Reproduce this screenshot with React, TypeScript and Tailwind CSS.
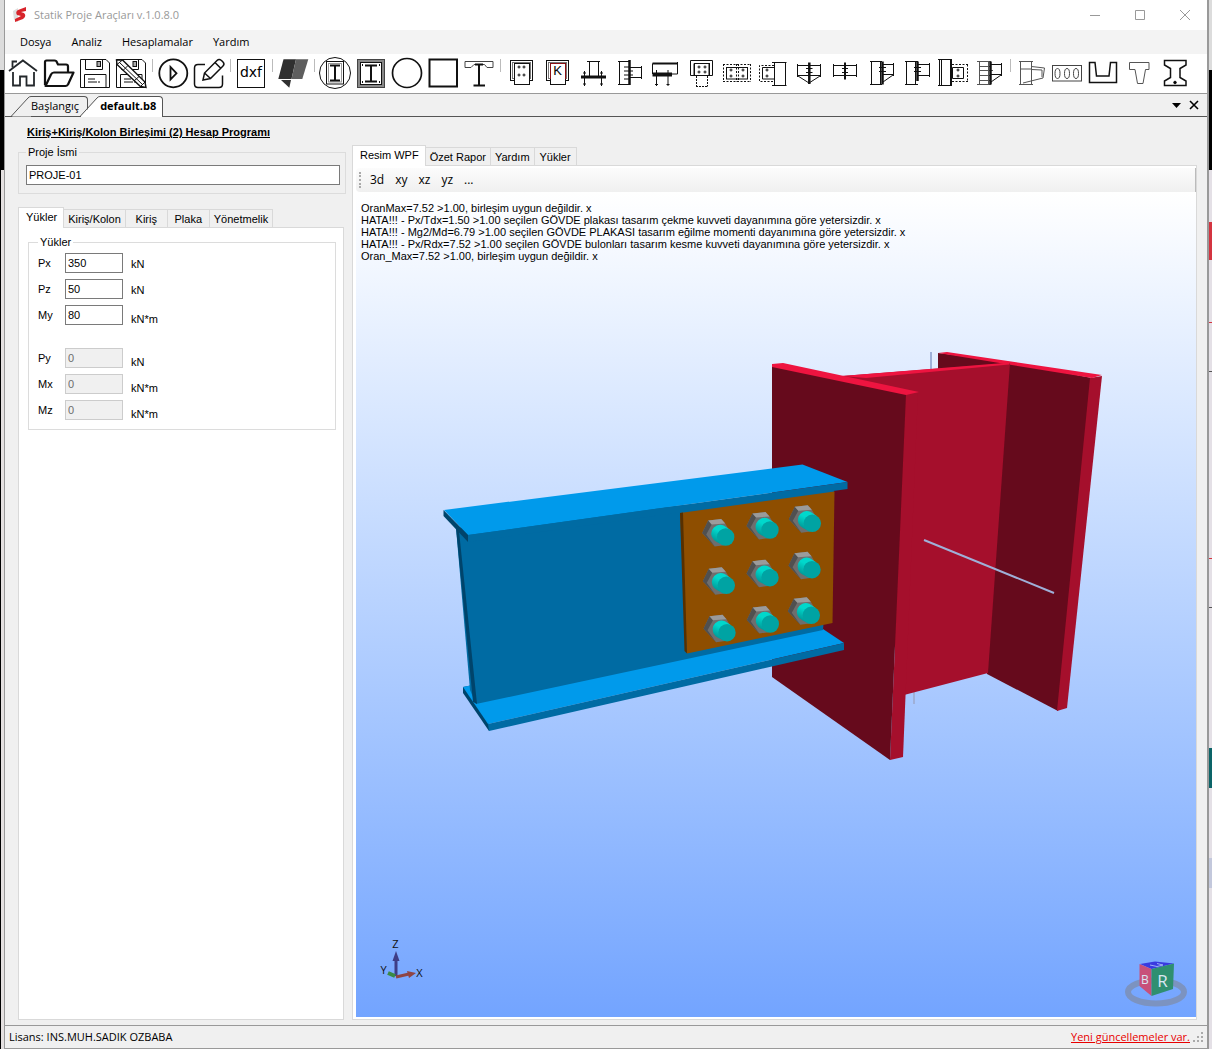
import { useState } from 'react'
import type { ReactNode } from 'react'
import clsx from 'clsx'

type Tool = { name: string; art: ReactNode }

const thick = { strokeWidth: 2 }
const dash = { strokeDasharray: '2 1.5' }

const bolts: [number, number][] = [
  [725.7, 537], [770, 530], [812.3, 523.3],
  [726.3, 585.3], [770, 577.7], [812, 569.7],
  [727, 632.7], [770.3, 624], [811.3, 615.3],
]

function Dots({ xs, ys }: { xs: number[]; ys: number[] }) {
  return (
    <>
      {xs.map((x) =>
        ys.map((y) => (
          <path key={`${x}-${y}`} d={`M${x - 1.5} ${y}h3M${x} ${y - 1.5}v3`} />
        ))
      )}
    </>
  )
}

const Floppy = () => (
  <>
    <path d="M3.5 4.5H29L32.5 8V32.5H3.5Z" />
    <path d="M8.5 4.5V14.5H25.5V4.5" />
    <rect x="20" y="6.5" width="3.5" height="5" fill="#aaa" />
    <path d="M7.5 32.5V19.5H29V32.5" />
    <path d="M11 24h7M11 27h9M21 27h2" />
  </>
)

const toolGroups: Tool[][] = [
  [
    {
      name: 'Ana sayfa',
      art: (
        <g stroke="#24282c" strokeWidth="1.8">
          <path d="M4 16 17.9 5.5 32 16" />
          <path d="M8 17V30.5H15V21.5H21.5V30.5H29V17" />
          <path d="M7.5 12.5V6.5H12" />
        </g>
      ),
    },
    {
      name: 'Aç',
      art: (
        <g strokeWidth="2.2" strokeLinejoin="round">
          <path d="M4 30V7Q4 5.5 5.5 5.5H13.5Q15.5 5.5 16 7.5L17 9.5H25Q27 9.5 27 11.5V17.5" />
          <path d="M4.5 31 10 19.5Q11 17.5 13 17.5H32.5L27 29.5Q26 31 24.5 31Z" />
        </g>
      ),
    },
    { name: 'Kaydet', art: <Floppy /> },
    {
      name: 'Farklı kaydet',
      art: (
        <>
          <Floppy />
          <path d="M3.5 5 9.5 5 32 27 33 32.5 27.500 31.500 4 9.5Z" fill="#fff" strokeWidth="1.4" />
          <path d="M6.5 7.5 30 30M9.5 5 4 9.5M15 10.5 10 15.500M26 21.5 21 26M32 27 27.500 31.500" />
        </>
      ),
    },
  ],
  [
    {
      name: 'Çalıştır',
      art: (
        <g strokeWidth="1.8">
          <circle cx="18.3" cy="18.3" r="14" />
          <path d="M15.5 12V24.5L21.5 18.3Z" />
        </g>
      ),
    },
    {
      name: 'Düzenle',
      art: (
        <g strokeWidth="1.5">
          <path d="M14 9.5H7Q3.5 9.5 3.5 13V29Q3.5 32.5 7 32.5H28Q31.5 32.5 31.5 29V20.5" />
          <path d="M12 25 13.5 18 26 5.5Q28 3.5 30.5 5.5L32 7Q34 9 32 11L19.5 23.5ZM24 7.5 30 13.5M13.5 18 19.5 23.5" />
        </g>
      ),
    },
  ],
  [
    {
      name: 'dxf',
      art: (
        <>
          <rect x="4.5" y="4.5" width="27" height="28" />
          <text x="18" y="22" textAnchor="middle" fontSize="14" fill="#000" stroke="none" fontFamily="DejaVu Sans, sans-serif">dxf</text>
        </>
      ),
    },
  ],
  [
    {
      name: 'Katı model',
      art: (
        <g stroke="none">
          <path d="M8.5 4.3H21L16.5 24H3.3Z" fill="#303030" />
          <path d="M21 4.3H33.3L27.3 24H16.5Z" fill="#5e5e5e" />
          <path d="M6 25H16L14.3 32.7Z" fill="#303030" />
        </g>
      ),
    },
  ],
  [
    {
      name: 'Dairesel kolon',
      art: (
        <>
          <circle cx="18" cy="18" r="15.5" />
          <rect x="9.5" y="6.5" width="17" height="22.5" />
          <rect x="11.5" y="8.5" width="13" height="18.5" stroke="#999" />
          <path d="M13 10.5H23M18 10.5V25.5M13 25.5H23" {...thick} />
        </>
      ),
    },
    {
      name: 'Kare kolon',
      art: (
        <>
          <rect x="6" y="6" width="24" height="25" stroke="#888" strokeWidth="3" />
          <rect x="4.5" y="4.5" width="27" height="28" stroke="#444" />
          <rect x="7.5" y="7.5" width="21" height="22" />
          <path d="M12 10.5H24M18 10.5V26.5M12 26.5H24" {...thick} />
          <path d="M9 10h1M26 10h1M9 27h1M26 27h1" {...thick} />
        </>
      ),
    },
    { name: 'Daire', art: <circle cx="18" cy="18" r="14.5" strokeWidth="1.7" /> },
    { name: 'Kare', art: <rect x="4.5" y="4.5" width="27.5" height="27" {...thick} /> },
    {
      name: 'Kompozit',
      art: (
        <>
          <path d="M4 12.5V6.5H32V12.5H26L23.5 9.5H13L10 12.5Z" stroke="#444" />
          <path d="M18 8.5V30.5M12.5 30.5H24M14 9.5H22" {...thick} />
        </>
      ),
    },
  ],
  [
    {
      name: 'Birleşim 1',
      art: (
        <>
          <rect x="7.5" y="5.5" width="22" height="20" />
          <rect x="9.5" y="7.5" width="18" height="16" stroke="#777" />
          <rect x="11.5" y="8.5" width="15" height="21" fill="#fff" />
          <Dots xs={[16, 21]} ys={[12, 20]} />
        </>
      ),
    },
    {
      name: 'Birleşim 2',
      art: (
        <>
          <rect x="7.5" y="5.5" width="22" height="20" />
          <rect x="9.5" y="7.5" width="18" height="16" stroke="#777" />
          <rect x="11.5" y="8.5" width="15" height="21" fill="#fff" />
          <path d="M11.5 24V8.5H26.5V24" stroke="#8c1015" />
          <text x="18.5" y="20" textAnchor="middle" fontSize="13" fill="#000" stroke="none" fontFamily="Liberation Sans, sans-serif">K</text>
        </>
      ),
    },
    {
      name: 'Birleşim 3',
      art: (
        <>
          <path d="M12 6.5H25M14.5 6.5V21M23.5 6.5V21M9.5 16V31M26.5 16V31M8 18H11M25 18H28M8 29H11M25 29H28" />
          <path d="M6 22H31" strokeWidth="3" />
        </>
      ),
    },
    {
      name: 'Birleşim 4',
      art: (
        <>
          <path d="M7 6.5H18M7 29.5H18M8.5 6.5V29.5M19 12.5H31M19 22.5H31M30.5 11V24M13 12H18M13 16H22M13 20H22M13 24H18" />
          <path d="M18.5 5V30" strokeWidth="2.5" />
        </>
      ),
    },
    {
      name: 'Birleşim 5',
      art: (
        <>
          <path d="M5.5 8.5V19M30.5 7V19H25M9.5 15V31M21 15V31M8 29.5H11M19.5 29.5H22.5" />
          <path d="M5.5 8.5H30.5" {...thick} />
          <path d="M5.5 19.5H25" strokeWidth="4" />
        </>
      ),
    },
    {
      name: 'Birleşim 6',
      art: (
        <>
          <path d="M7.5 20.5V5.5H29.5V20.5H26V8.5H11V20.5Z" />
          <rect x="11.5" y="8.5" width="15" height="12" />
          <path d="M13.5 21V31.5M24.5 21V31.5M13 31.5H25" strokeDasharray="2 1" />
          <Dots xs={[16, 22]} ys={[12, 17]} />
        </>
      ),
    },
    {
      name: 'Birleşim 7',
      art: (
        <>
          <path d="M4 9.5H32M4 26.5H32M4.500 9V27M31.500 9V27M17.5 9V27M19.5 9V27" {...dash} />
          <rect x="7.5" y="12.5" width="21" height="11.5" />
          <Dots xs={[12, 24]} ys={[15, 21]} />
        </>
      ),
    },
    {
      name: 'Birleşim 8',
      art: (
        <>
          <path d="M19 10.5H4.5V26.5H19" {...dash} />
          <path d="M19 12.5H7.5V24H19M17 7.5H31.5M17 30.5H31.5M19.5 7.5V30.5M30.5 7.5V30.5" />
          <Dots xs={[12]} ys={[15, 21]} />
        </>
      ),
    },
    {
      name: 'Birleşim 9',
      art: (
        <>
          <path d="M6.5 10.5H30M6.5 20.5H30M6.5 9V22M29.5 9V22M7 21 18 28 29 21M15 13.5H21.5M15 17.5H21.5" />
          <path d="M18.3 7.5V29" strokeWidth="2.5" />
        </>
      ),
    },
    {
      name: 'Birleşim 10',
      art: (
        <>
          <path d="M6.5 10.5H30M6.5 20.5H30M6.5 9V22M29.5 9V22M15 13.5H21M15 17.5H21" />
          <path d="M18 7.5V24.5" {...thick} />
        </>
      ),
    },
    {
      name: 'Birleşim 11',
      art: (
        <>
          <path d="M7 6.5H19M7 29.5H19M8.5 6.5V29.5M17.5 6.5V29.5M20 9.5H31M20 19.5H31M30.5 8V21M20 27 30 20M16 12.5H23M16 16.5H23" />
          <path d="M19.5 6.5V29.5" strokeWidth="2.5" />
        </>
      ),
    },
    {
      name: 'Birleşim 12',
      art: (
        <>
          <path d="M6 6.5H19M6 29.5H19M7.5 6.5V29.5M16.5 6.5V29.5M19 9.5H31M19 20.5H31M30.5 8V22M15 12.5H22M15 16.5H22" />
          <path d="M18.5 6.5V26" strokeWidth="2.5" />
        </>
      ),
    },
    {
      name: 'Birleşim 13',
      art: (
        <>
          <path d="M3 4.5H17M3 30.5H17M4.5 4.5V30.5M6.5 4.5V30.5M17.5 12.5H28.5V23.5H17.5Z" />
          <path d="M17 9.5H33M17 26.5H33M32.5 9.5V26.5" {...dash} />
          <path d="M16 4.5V31" {...thick} />
          <Dots xs={[23]} ys={[15, 21]} />
        </>
      ),
    },
    {
      name: 'Birleşim 14',
      art: (
        <>
          <path d="M6 6.5H20M6 29.5H20M8.5 6.5V29.5M17.5 6.5V29.5M8.5 11.5H19M8.5 15.5H22M8.5 20.5H19M8.5 25.5H19" stroke="#555" />
          <path d="M19 9.5H31M19 19.5H31M30.5 8V21M20 27 30 20" />
          <path d="M19.5 6.5V29.5" strokeWidth="2.5" />
        </>
      ),
    },
  ],
  [
    {
      name: 'Guseli kiriş',
      art: (
        <g stroke="#555">
          <path d="M6 6.5H20M6 29.5H20M7.5 6.5V29.5M18.5 6.5V29.5M7.5 14H18.5" />
          <path d="M18.5 11.5 31.5 13 30 23 10 28M18.5 14.500 29 15V22" />
        </g>
      ),
    },
    {
      name: 'Petek kiriş',
      art: (
        <g stroke="#444">
          <rect x="3.5" y="10.5" width="29" height="15.5" />
          {[8.5, 18, 27].map((cx) => (
            <ellipse key={cx} cx={cx} cy="18.5" rx="2.5" ry="5" />
          ))}
        </g>
      ),
    },
    {
      name: 'U kanal',
      art: <path d="M4.5 7.5H10L11.5 21H24L25.5 7.5H31.5V27.5H4.5Z" strokeWidth="1.5" />,
    },
    {
      name: 'T kesit',
      art: <path d="M8.5 7.5H28V14.5H24.5L22 28.5H16.5L14 14.5H8.5Z" stroke="#555" />,
    },
    {
      name: 'I kesit',
      art: (
        <>
          <path d="M7.5 5.5H29V10L23 13.5V22.5L29 26V30.5H7.5V26L13.5 22.5V13.5L7.5 10Z" strokeWidth="1.5" />
          <circle cx="18" cy="27.5" r="1.3" fill="#000" />
        </>
      ),
    },
  ],
]

const menus = ['Dosya', 'Analiz', 'Hesaplamalar', 'Yardım']
const leftTabs = ['Yükler', 'Kiriş/Kolon', 'Kiriş', 'Plaka', 'Yönetmelik']
const rightTabs = ['Resim WPF', 'Özet Rapor', 'Yardım', 'Yükler']
const views = ['3d', 'xy', 'xz', 'yz', '...']

const loads = [
  { id: 'Px', value: '350', unit: 'kN' },
  { id: 'Pz', value: '50', unit: 'kN' },
  { id: 'My', value: '80', unit: 'kN*m', low: true },
]

const lockedLoads = [
  { id: 'Py', value: '0', unit: 'kN', low: true },
  { id: 'Mx', value: '0', unit: 'kN*m', low: true },
  { id: 'Mz', value: '0', unit: 'kN*m', low: true },
]

const messages = [
  'OranMax=7.52 >1.00, birleşim uygun değildir. x',
  'HATA!!! - Px/Tdx=1.50 >1.00 seçilen GÖVDE plakası tasarım çekme kuvveti dayanımına göre yetersizdir. x',
  'HATA!!! - Mg2/Md=6.79 >1.00 seçilen GÖVDE PLAKASI tasarım eğilme momenti dayanımına göre yetersizdir. x',
  'HATA!!! - Px/Rdx=7.52 >1.00 seçilen GÖVDE bulonları tasarım kesme kuvveti dayanımına göre yetersizdir. x',
  'Oran_Max=7.52 >1.00, birleşim uygun değildir. x',
]

function TitleBar() {
  return (
    <header className="flex h-[30px] items-center bg-white pl-2">
      <svg width="14" height="16" viewBox="0 0 14 16" aria-hidden="true">
        <path d="M0 4 5 1V15L1 13Z" fill="#ddd" />
        <path d="M13 0 5 3Q2 5 4 8L8 9 2 12V15L10 12Q14 9 11 6L8 5 13 4Z" fill="#d8232a" />
      </svg>
      <h1 className="flex-1 pl-[7px] text-[11px] text-[#999]">Statik Proje Araçları v.1.0.8.0</h1>
      <div className="flex text-[#999]">
        {['M13 10.5H23', 'M13.5 5.5H22.5V14.5H13.5Z', 'M13 5 23 15M23 5 13 15'].map((d, i) => (
          <button key={d} aria-label={['Küçült', 'Büyüt', 'Kapat'][i]} className="flex h-[30px] w-[45px] items-center justify-center">
            <svg width="35" height="20" viewBox="0 0 35 20" fill="none" stroke="currentColor"><path d={d} /></svg>
          </button>
        ))}
      </div>
    </header>
  )
}

function Toolbar() {
  return (
    <div className="flex h-10 items-start overflow-hidden border-b border-[#999] bg-white pt-px">
      {toolGroups.map((group, i) => (
        <div key={i} className="flex shrink-0">
          {i > 0 && <div className="ml-[3px] mr-[2px] mt-1 h-[13px] w-px bg-[#bbb]" />}
          {group.map(({ name, art }) => (
            <button key={name} aria-label={name} className="h-9 w-9 hover:bg-sky-100">
              <svg width="36" height="36" viewBox="0 0 36 36" fill="none" stroke="#111" strokeWidth="1">
                {art}
              </svg>
            </button>
          ))}
        </div>
      ))}
    </div>
  )
}

function DocumentTabs() {
  return (
    <nav className="flex h-[23px] items-end border-b border-[#555] bg-[#f0f0f0] pl-1.5">
      {['Başlangıç', 'default.b8'].map((title, i) => (
        <button
          key={title}
          className={clsx('flex text-[11px] leading-[18px]', i === 1 ? 'relative -mb-px -ml-2 h-[21px] font-bold' : 'h-5')}
        >
          <svg width="20" height="21" viewBox="0 0 20 21" className="shrink-0" fill={i === 1 ? '#fff' : '#f0f0f0'} stroke="#555">
            <path d="M1 20.5H20V1Q18.5 1 17 3Z" stroke="none" />
            <path d="M0 20.5 17 2Q18 .5 20 .5" fill="none" />
            {i === 1 && <path d="M1 20.500H20" stroke="#fff" />}
          </svg>
          <span className={clsx('h-full rounded-tr-sm border-r border-t border-[#555]', i === 1 ? 'bg-white pr-1.5' : 'pr-2')}>
            {title}
          </span>
        </button>
      ))}
      <div className="ml-auto flex h-full items-center gap-2 pr-2">
        <button aria-label="Sekme listesi">
          <svg width="9" height="5" viewBox="0 0 9 5"><path d="M0 0H9L4.5 5Z" /></svg>
        </button>
        <button aria-label="Sekmeyi kapat">
          <svg width="10" height="10" viewBox="0 0 10 10" stroke="#000" strokeWidth="1.6"><path d="M1 1 9 9M9 1 1 9" /></svg>
        </button>
      </div>
    </nav>
  )
}

function TabStrip({ tabs, active, onSelect }: { tabs: string[]; active: string; onSelect: (t: string) => void }) {
  return (
    <div role="tablist" className="flex items-end">
      {tabs.map((tab) => (
        <button
          key={tab}
          role="tab"
          aria-selected={tab === active}
          onClick={() => onSelect(tab)}
          className={clsx(
            'border-r border-t border-[#d9d9d9]',
            tab === active
              ? 'relative -mb-px h-[21px] border-l bg-white pb-0.5 pl-[7px] pr-1.5'
              : 'h-[18px] min-w-[42px] bg-[#f0f0f0] px-1'
          )}
        >
          {tab}
        </button>
      ))}
    </div>
  )
}

type Load = { id: string; value: string; unit: string; low?: boolean }

function LoadRow({ load, disabled }: { load: Load; disabled?: boolean }) {
  return (
    <div className="flex h-5 items-center">
      <label htmlFor={load.id} className="w-[27px]">{load.id}</label>
      <input
        id={load.id}
        defaultValue={load.value}
        disabled={disabled}
        className="h-5 w-[58px] border border-[#7a7a7a] bg-white px-0.5 disabled:border-[#ccc] disabled:bg-[#f0f0f0] disabled:text-[#6d6d6d]"
      />
      <span className={clsx('pl-2', load.low ? 'pt-2' : 'pt-px')}>{load.unit}</span>
    </div>
  )
}

function Bolt({ x, y }: { x: number; y: number }) {
  return (
    <g transform={`translate(${x} ${y})`}>
      <path d="M-23.5 -4 -17.5 -16.5 -4.5 -18 -.5 -13.500 5 -4 0 8 -11 9.500Z" fill="#6e6e6e" />
      <path d="M-23.5 -4 -17.5 -16.5 -14 -12.5 -19.5 -2.500 -11 9.500Z" fill="#505050" />
      <path d="M-17.5 -16.5 -4.5 -18 -.5 -13.5 -14 -12.5Z" fill="#9b9b9b" />
      <path d="M-9 5A8.5 8.500 0 0 1 -2 -11.500L4 -7.500 -4 7.500Z" fill="url(#shank)" />
      <circle r="8.7" fill="#00a3a3" />
    </g>
  )
}

function Scene() {
  return (
    <svg viewBox="356 192 840 825" className="absolute inset-0 h-full w-full" aria-label="Birleşim modeli">
      <defs>
        <linearGradient id="shank" x1="0.8" y1="0" x2="0.3" y2="1">
          <stop offset="0" stopColor="#00d8cc" />
          <stop offset="0.4" stopColor="#00d8cc" />
          <stop offset="1" stopColor="#008f8f" />
        </linearGradient>
      </defs>

      {/* kolon */}
      <path d="M931 352V369" stroke="#9fb0d8" strokeWidth="2" />
      <path d="M914 690V704" stroke="#9fb0d8" strokeWidth="2" />
      <path d="M938 353 1010 362 1092 378 1058 711 987 674 938 400Z" fill="#660a1c" />
      <path d="M1090 378 1102 376 1067 708 1057 711Z" fill="#a50f2c" />
      <path d="M938 353 947 352 1102 375 1092 378Z" fill="#ee1440" />
      <path d="M842 376 1010 363 988 673 904 695Z" fill="#a50f2c" />
      <path d="M842 376 1010 362.5 1009 364.5 866 378Z" fill="#ee1440" />
      <path d="M906 394 918 391 903 757 890 760Z" fill="#a50f2c" />
      <path d="M772 365 906 394 890 760 772 677Z" fill="#660a1c" />
      <path d="M772 364 783 363 919 392 906 395 772 367Z" fill="#ee1440" />
      <path d="M924 540 1054 593" stroke="#9fb0d8" strokeWidth="2" />

      {/* kiriş */}
      <path d="M463 687 478 684 489 724 489 731 463 693Z" fill="#00446b" />
      <path d="M463 687 800 617 823 629 844 643 488 724Z" fill="#009aeb" />
      <path d="M488 724 844 643V650L489 731Z" fill="#006ba3" />
      <path d="M456 528 834 490 823 630 476 704 470 690Z" fill="#006ba3" />
      <path d="M456 528 459 531 477 704 473 702Z" fill="#00446b" />
      <path d="M444 510 802.5 464.5 847.5 482 468 535Z" fill="#009aeb" />
      <path d="M468 535 847.5 482V489L468 542Z" fill="#006ba3" />
      <path d="M443.5 510 468 535V542L443.5 516Z" fill="#00446b" />

      {/* plaka ve bulonlar */}
      <path d="M680 513 834.5 491.5 832.5 623 687 653.5Z" fill="#8e4e00" />
      <path d="M680 513 683 512.5 687 653.5 684.5 651Z" fill="#573000" />
      {bolts.map(([x, y]) => (
        <Bolt key={`${x}-${y}`} x={x} y={y} />
      ))}

      {/* eksenler */}
      <g fontFamily="Open Sans, sans-serif" fontSize="11" fill="#111" textAnchor="middle">
        <path d="M396 976V960" stroke="#3f3d85" strokeWidth="3" />
        <path d="M392.5 961 396 951 399.5 961Z" fill="#3f3d85" />
        <path d="M396 977 409 974" stroke="#8f4444" strokeWidth="3" />
        <path d="M407 971 416 973 409 978Z" fill="#8f4444" />
        <path d="M395 976 388 973" stroke="#3a8a45" strokeWidth="4" />
        <text x="395.5" y="948">Z</text>
        <text x="419.5" y="977">X</text>
        <text x="383.5" y="974">Y</text>
      </g>

      {/* görünüm küpü */}
      <ellipse cx="1156" cy="992" rx="28" ry="11.5" fill="none" stroke="#7c93c0" strokeWidth="6" />
      <path d="M1140 964 1155 961.5 1174 963.5 1151.5 969Z" fill="#3a3ae0" />
      <path d="M1139.5 964 1151.5 969V996L1139.5 986Z" fill="#c8507a" />
      <path d="M1151.5 969 1174 963.5 1173 989 1151.5 996Z" fill="#2f8f70" />
      <g fontFamily="Open Sans, sans-serif" fill="#d9e6f2" textAnchor="middle">
        <text x="1162.5" y="987" fontSize="17">R</text>
        <text x="1145" y="984" fontSize="12">B</text>
        <path d="M1150 965 1157 966.500 1163 965 1157 963.500" fill="none" stroke="#9db0f5" />
      </g>
    </svg>
  )
}

export default function App() {
  const [leftTab, setLeftTab] = useState('Yükler')
  const [rightTab, setRightTab] = useState('Resim WPF')

  return (
    <div className="flex min-h-screen bg-[#e4e0e6] font-['Open_Sans','Noto_Sans',sans-serif] text-black">
      {/* Desktop edge, left */}
      <div className="flex w-1 shrink-0 flex-col">
        <div className="h-[70px] bg-[#dcdcdc]" />
        <div className="h-[100px] bg-black" />
        <div className="flex-1 border-l border-black bg-[#e4e0e0]" />
      </div>

      <div className="flex min-w-0 flex-1 flex-col border-l border-r-2 border-[#999] bg-[#f0f0f0]">
        <TitleBar />
        <nav className="flex h-6 items-center bg-[#f3f3f3] pl-[5px] text-[11px]">
          {menus.map((menu) => (
            <button key={menu} className="px-2.5 hover:bg-sky-100">{menu}</button>
          ))}
        </nav>
        <Toolbar />
        <DocumentTabs />

        <main className="flex flex-1 gap-1.5 pb-[5px] pl-[13px] pr-2.5 pt-2 font-['Liberation_Sans',Arial,sans-serif] text-[11px] leading-[14px]">
          <section className="flex w-[328px] shrink-0 flex-col">
            <h2 className="pl-[9px] font-bold underline">Kiriş+Kiriş/Kolon Birleşimi (2) Hesap Programı</h2>
            <fieldset className="mt-1.5 border border-[#dcdcdc] pb-2 pl-[7px] pr-[5px] pt-1.5">
              <legend className="px-0.5"><label htmlFor="project">Proje İsmi</label></legend>
              <input id="project" defaultValue="PROJE-01" className="block h-5 w-full border border-[#7a7a7a] bg-white px-0.5" />
            </fieldset>

            <div className="mt-[13px] flex flex-1 flex-col pr-0.5">
              <TabStrip tabs={leftTabs} active={leftTab} onSelect={setLeftTab} />
              <div className="flex-1 border border-[#d9d9d9] bg-white pl-[9px] pr-[7px] pt-[7px]">
                <fieldset className="border border-[#dcdcdc] px-[9px] pb-[9px] pt-1">
                  <legend className="px-0.5">Yükler</legend>
                  <div className="flex flex-col gap-1.5">
                    {loads.map((load) => (
                      <LoadRow key={load.id} load={load} />
                    ))}
                  </div>
                  <div className="mt-[23px] flex flex-col gap-1.5">
                    {lockedLoads.map((load) => (
                      <LoadRow key={load.id} load={load} disabled />
                    ))}
                  </div>
                </fieldset>
              </div>
            </div>
          </section>

          <section className="flex min-w-0 flex-1 flex-col pt-5">
            <TabStrip tabs={rightTabs} active={rightTab} onSelect={setRightTab} />
            <div className="flex flex-1 flex-col border border-[#d9d9d9] bg-white pb-0.5 pl-[3px] pt-0.5">
              <div className="flex h-6 shrink-0 items-center gap-px rounded-l border-r border-[#bbb] bg-gradient-to-b from-[#fcfcfc] to-[#f0f0f0] pl-[3px] font-['Open_Sans',sans-serif] text-[12px]">
                <div className="mr-[3px] h-4 border-l-2 border-dotted border-[#aaa]" />
                {views.map((view) => (
                  <button key={view} className="px-[5px] hover:bg-sky-100">{view}</button>
                ))}
              </div>
              <div className="relative flex-1 overflow-hidden bg-gradient-to-b from-white to-[#73a4ff]">
                <Scene />
                <div className="relative pl-[5px] pt-2.5 leading-[12px]">
                  {messages.map((message) => (
                    <p key={message}>{message}</p>
                  ))}
                </div>
              </div>
            </div>
          </section>
        </main>

        <footer className="flex h-6 shrink-0 items-center border-y border-[#999] pl-1 pr-0.5 text-[11px]">
          <span className="flex-1">Lisans: INS.MUH.SADIK OZBABA</span>
          <a href="#" className="text-[#e80000] underline">Yeni güncellemeler var.</a>
          <svg width="14" height="14" viewBox="0 0 14 14" fill="#aaa" className="ml-px">
            <path d="M10 2h2v2h-2zM10 6h2v2h-2zM10 10h2v2h-2zM6 6h2v2h-2zM6 10h2v2h-2zM2 10h2v2h-2z" />
          </svg>
        </footer>
      </div>

      {/* Desktop edge, right */}
      <div className="flex w-[3px] shrink-0 flex-col">
        <div className="h-[70px] bg-[#dcdcdc]" />
        <div className="h-[100px] bg-black" />
        <div className="h-[52px]" />
        <div className="h-[38px] bg-[#d43440]" />
        <div className="mt-[62px] h-px bg-[#d43440]" />
        <div className="mt-[48px] h-px bg-[#555]" />
        <div className="mt-[186px] h-px bg-[#d43440]" />
        <div className="mt-[48px] h-px bg-[#555]" />
        <div className="mt-[140px] h-[40px] bg-[#0c6468]" />
        <div className="mt-[70px] h-[30px] bg-[#c3c8dc]" />
      </div>
    </div>
  )
}
